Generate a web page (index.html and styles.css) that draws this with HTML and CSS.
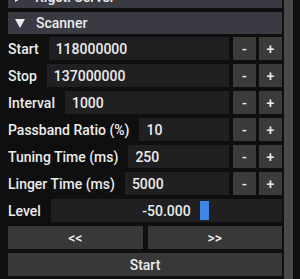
FILE: index.html
```html
<!DOCTYPE html>
<html lang="en">
<head>
  <meta charset="UTF-8">
  <title>Scanner</title>
  <link rel="stylesheet" href="styles.css">
</head>
<body>
  <div class="window">
    <div class="panel">
      <div class="header">
        <span class="arrow arrow-right"></span>
        <span>Rigctl Server</span>
      </div>
      <div class="header header-open">
        <span class="arrow arrow-down"></span>
        <span>Scanner</span>
      </div>

      <div class="row">
        <span class="label">Start</span>
        <div class="field">118000000</div>
        <button class="step">-</button>
        <button class="step">+</button>
      </div>
      <div class="row">
        <span class="label">Stop</span>
        <div class="field">137000000</div>
        <button class="step">-</button>
        <button class="step">+</button>
      </div>
      <div class="row">
        <span class="label">Interval</span>
        <div class="field">1000</div>
        <button class="step">-</button>
        <button class="step">+</button>
      </div>
      <div class="row">
        <span class="label">Passband Ratio (%)</span>
        <div class="field">10</div>
        <button class="step">-</button>
        <button class="step">+</button>
      </div>
      <div class="row">
        <span class="label">Tuning Time (ms)</span>
        <div class="field">250</div>
        <button class="step">-</button>
        <button class="step">+</button>
      </div>
      <div class="row">
        <span class="label">Linger Time (ms)</span>
        <div class="field">5000</div>
        <button class="step">-</button>
        <button class="step">+</button>
      </div>
      <div class="row">
        <span class="label">Level</span>
        <div class="slider">
          <span class="slider-value">-50.000</span>
          <span class="slider-grab"></span>
        </div>
      </div>
      <div class="row row-buttons">
        <button class="btn">&lt;&lt;</button>
        <button class="btn">&gt;&gt;</button>
      </div>
      <div class="row">
        <button class="btn">Start</button>
      </div>
    </div>
    <div class="scrollbar"></div>
  </div>
</body>
</html>
```

FILE: styles.css
```css
:root {
  --bg: #0f0f0f;
  --header: #3a3a43;
  --frame: #202022;
  --button: #3b3b3b;
  --button-wide: #383838;
  --text: #ececec;
  --grab: #3d86e8;
}

* {
  margin: 0;
  padding: 0;
  box-sizing: border-box;
}

html, body {
  height: 100%;
  overflow: hidden;
}

body {
  background-color: var(--bg);
  font-family: Roboto, "Noto Sans", sans-serif;
  font-size: 14px;
  font-weight: 500;
  color: var(--text);
}

.window {
  display: flex;
  padding: 0 7px 0 8px;
  gap: 2px;
}

.panel {
  flex: 1;
  display: flex;
  flex-direction: column;
  gap: 4px;
  margin-top: -14px;
}

/* Collapsing headers */
.header {
  height: 22px;
  background-color: var(--header);
  display: flex;
  align-items: center;
  gap: 11px;
  padding-left: 7px;
  font-weight: 500;
}

.header-open {
  margin-bottom: -1px;
}

.arrow {
  width: 0;
  height: 0;
  border-style: solid;
}

.arrow-down {
  border-width: 9px 5px 0 5px;
  border-color: var(--text) transparent transparent transparent;
}

.arrow-right {
  border-width: 5px 0 5px 9px;
  border-color: transparent transparent transparent var(--text);
}

/* Rows */
.row {
  height: 23px;
  display: flex;
  align-items: stretch;
  gap: 3px;
}

.label {
  display: flex;
  align-items: center;
  margin-right: 7px;
  white-space: nowrap;
}

.field {
  flex: 1;
  background-color: var(--frame);
  display: flex;
  align-items: center;
  padding-left: 7px;
  margin-right: 1px;
}

.step {
  width: 23px;
  border: none;
  background-color: var(--button);
  color: var(--text);
  font-family: inherit;
  font-size: 14px;
  font-weight: 500;
}

/* Level slider */
.slider {
  flex: 1;
  position: relative;
  background-color: var(--frame);
  display: flex;
  align-items: center;
  justify-content: center;
}

.slider-grab {
  position: absolute;
  left: 149px;
  top: 2px;
  bottom: 2px;
  width: 9px;
  background-color: var(--grab);
}

/* Wide buttons */
.row-buttons {
  gap: 5px;
}

.btn {
  flex: 1;
  border: none;
  background-color: var(--button-wide);
  color: var(--text);
  font-family: inherit;
  font-size: 14px;
  font-weight: 500;
}

.scrollbar {
  width: 9px;
  background-color: #4a4a4a;
  height: 279px;
}
```
